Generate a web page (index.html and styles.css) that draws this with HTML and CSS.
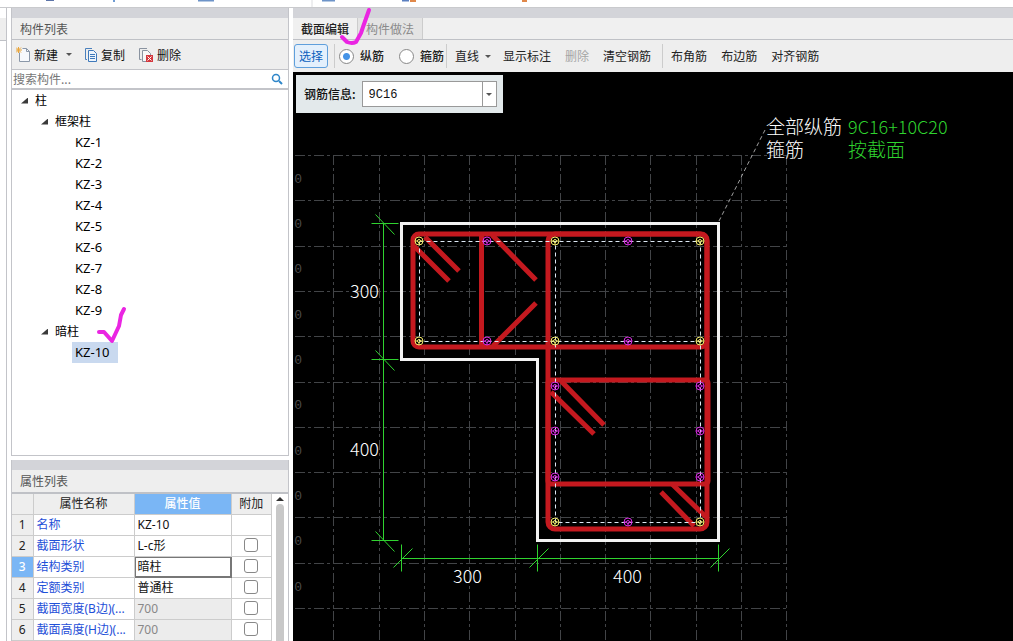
FILE: index.html
```html
<!DOCTYPE html>
<html lang="zh-CN">
<head>
<meta charset="utf-8">
<title>截面编辑</title>
<link rel="stylesheet" href="styles.css">
</head>
<body>
<div class="app">
  <div class="ribbon-edge" aria-hidden="true">
    <svg width="560" height="7">
      <path d="M46 0h8" stroke="#5c74a8" stroke-width="2"/>
      <path d="M114 0v2" stroke="#6f9bd2" stroke-width="2"/>
      <path d="M198 0h16M322 0h13" stroke="#6d93c8" stroke-width="3"/>
      <path d="M312 0v7" stroke="#dcdde0"/>
      <path d="M402 0h7" stroke="#5a7fc0" stroke-width="3"/>
      <path d="M410 0h6M522 0h5" stroke="#e0884a" stroke-width="4"/>
    </svg>
  </div>
  <div class="workspace">
    <div class="nav-edge"><div class="nav-cap"></div></div>

    <aside class="side">
      <section class="panel panel-tree">
        <div class="grip"></div>
        <h2 class="panel-title">构件列表</h2>
        <div class="list-tools">
          <button class="tool tool-new" type="button">
            <svg width="15" height="16"><path d="M3.500 5.500V14.500H13.500V4.500L10.500 1.500H6.500" fill="#f7f9fc" stroke="#8a97a8"/><path d="M10.500 1.500V4.500h3" fill="none" stroke="#8a97a8"/><path d="M2.500 0v6M0 3h6M0 .5l5 5M5 .5l-5 5" stroke="#e9a53a"/></svg>
            新建<span class="caret"></span>
          </button>
          <button class="tool tool-copy" type="button">
            <svg width="14" height="14"><path d="M3 11.500H1.500V.5H8" fill="none" stroke="#4a80bd"/><path d="M4.500 2.500H9.500L12.500 5.500V13.500H4.500Z" fill="#eef5fc" stroke="#3f79ba"/><path d="M6 6.500h5M6 8.500h5M6 10.500h5" stroke="#3f79ba"/></svg>
            复制
          </button>
          <button class="tool" type="button">
            <svg width="15" height="14"><path d="M2.500 11.500H.5V.5H8" fill="none" stroke="#8a93a0"/><path d="M7 13.500H3.500V2.500H8.500L11.500 5.500V7" fill="#f7f7f7" stroke="#8a93a0"/><rect x="7" y="7" width="7" height="7" fill="#d5383e"/><path d="M8.500 8.500l4 4M12.500 8.500l-4 4" stroke="#fff"/></svg>
            删除
          </button>
        </div>
        <div class="search">
          <input class="search-input" type="text" placeholder="搜索构件..." aria-label="搜索构件">
          <button class="search-btn" type="button" aria-label="搜索"><svg width="12" height="12"><circle cx="5" cy="5" r="3.500" fill="none" stroke="#2e86c9" stroke-width="1.500"/><path d="M8 8l3 3" stroke="#2e86c9" stroke-width="2"/></svg></button>
        </div>
        <ul class="tree">
          <li><span class="node"><i class="twist"></i>柱</span>
            <ul class="level-2">
              <li><span class="node"><i class="twist"></i>框架柱</span>
                <ul class="leaves">
                  <li><span class="leaf">KZ-1</span></li>
                  <li><span class="leaf">KZ-2</span></li>
                  <li><span class="leaf">KZ-3</span></li>
                  <li><span class="leaf">KZ-4</span></li>
                  <li><span class="leaf">KZ-5</span></li>
                  <li><span class="leaf">KZ-6</span></li>
                  <li><span class="leaf">KZ-7</span></li>
                  <li><span class="leaf">KZ-8</span></li>
                  <li><span class="leaf">KZ-9</span></li>
                </ul>
              </li>
              <li><span class="node"><i class="twist"></i>暗柱</span>
                <ul class="leaves"><li><span class="leaf leaf-active">KZ-10</span></li></ul>
              </li>
            </ul>
          </li>
        </ul>
      </section>

      <section class="panel panel-props">
        <div class="grip"></div>
        <h2 class="panel-title">属性列表</h2>
        <div class="props-body">
          <table class="props">
            <thead><tr><th class="c-num"></th><th class="c-name">属性名称</th><th class="c-value is-current">属性值</th><th class="c-extra">附加</th></tr></thead>
            <tbody>
              <tr><th>1</th><td class="name">名称</td><td>KZ-10</td><td></td></tr>
              <tr><th>2</th><td class="name">截面形状</td><td>L-c形</td><td class="check"><input type="checkbox" aria-label="截面形状 附加"></td></tr>
              <tr><th class="is-current">3</th><td class="name">结构类别</td><td class="is-editing">暗柱</td><td class="check"><input type="checkbox" aria-label="结构类别 附加"></td></tr>
              <tr><th>4</th><td class="name">定额类别</td><td>普通柱</td><td class="check"><input type="checkbox" aria-label="定额类别 附加"></td></tr>
              <tr><th>5</th><td class="name">截面宽度(B边)(...</td><td class="locked">700</td><td class="check"><input type="checkbox" aria-label="截面宽度 附加"></td></tr>
              <tr><th>6</th><td class="name">截面高度(H边)(...</td><td class="locked">700</td><td class="check"><input type="checkbox" aria-label="截面高度 附加"></td></tr>
            </tbody>
          </table>
          <div class="scroll"><i class="scroll-up"></i><i class="scroll-thumb"></i></div>
        </div>
      </section>
    </aside>

    <main class="editor">
      <div class="grip"></div>
      <div class="tabs" role="tablist">
        <button class="tab tab-active" type="button" role="tab" aria-selected="true">截面编辑</button>
        <button class="tab" type="button" role="tab" aria-selected="false">构件做法</button>
      </div>
      <div class="bar">
        <button class="pick" type="button">选择</button>
        <i class="rule"></i>
        <label class="mode"><input type="radio" name="mode" checked>纵筋</label>
        <label class="mode"><input type="radio" name="mode">箍筋</label>
        <i class="rule rule-tight"></i>
        <button class="cmd cmd-line" type="button">直线<span class="caret"></span></button>
        <button class="cmd" type="button">显示标注</button>
        <button class="cmd" type="button" disabled>删除</button>
        <button class="cmd" type="button">清空钢筋</button>
        <i class="rule rule-tight"></i>
        <button class="cmd" type="button">布角筋</button>
        <button class="cmd" type="button">布边筋</button>
        <button class="cmd" type="button">对齐钢筋</button>
      </div>
      <div class="canvas">
        <svg class="drawing" role="img" aria-label="KZ-10 截面">
          <defs>
            <g id="rebar" fill="none"><circle r="4"/><circle r="1.500"/><path d="M-4 0h3M1 0h3M0 4v-3"/></g>
            <path id="tick-v" d="M-12 0H15M-8 -9L11 11"/>
            <path id="tick-h" d="M0 -14V13M-8 9L11 -10"/>
          </defs>
          <g transform="translate(-293 -72)">
            <path class="grid" d="M295 155.500H787M295 200.500H787M295 246.500H787M295 291.500H787M295 336.500H787M295 382.500H787M295 427.500H787M295 472.500H787M295 517.500H787M295 563.500H787M295 608.500H787"/>
            <path class="grid" d="M333.500 155V641M379.500 155V641M424.500 155V641M469.500 155V641M515.500 155V641M560.500 155V641M605.500 155V641M650.500 155V641M696.500 155V641M741.500 155V641M786.500 155V641"/>
            <g class="scale">
              <text x="302" y="183">0</text><text x="302" y="228">0</text><text x="302" y="273">0</text><text x="302" y="319">0</text><text x="302" y="364">0</text><text x="302" y="409">0</text><text x="302" y="455">0</text><text x="302" y="500">0</text><text x="302" y="545">0</text><text x="302" y="591">0</text>
            </g>
            <path class="leader" d="M719 221L765 130"/>
            <path class="outline" d="M401.500 223.500H718.500V540.500H537.500V359.500H401.500Z"/>
            <g class="stirrup">
              <rect x="413" y="234" width="294" height="113" rx="6"/>
              <rect x="548" y="234" width="159" height="295" rx="7"/>
              <rect x="548" y="380" width="160" height="104" rx="3"/>
              <path d="M481.500 234V347"/>
              <path class="hook" d="M414 246L449 281M425 237L459 271M492 235L536 280M493 346L536 303M551 392L594 434M561 381L604 425M661 492L694 526M672 484L706 517"/>
            </g>
            <path class="core" d="M419.500 241.500H700.500V522.500H555.500V241.500M419.500 241.500V341.500H700.500"/>
            <g stroke="#f2ea6a">
              <use href="#rebar" x="419" y="241"/><use href="#rebar" x="555" y="241"/><use href="#rebar" x="700" y="241"/><use href="#rebar" x="419" y="341"/><use href="#rebar" x="555" y="341"/><use href="#rebar" x="700" y="341"/><use href="#rebar" x="555" y="522"/><use href="#rebar" x="700" y="522"/>
            </g>
            <g stroke="#d62be0">
              <use href="#rebar" x="487" y="241"/><use href="#rebar" x="628" y="241"/><use href="#rebar" x="487" y="341"/><use href="#rebar" x="628" y="341"/><use href="#rebar" x="555" y="386"/><use href="#rebar" x="700" y="386"/><use href="#rebar" x="555" y="431"/><use href="#rebar" x="700" y="431"/><use href="#rebar" x="555" y="477"/><use href="#rebar" x="700" y="477"/><use href="#rebar" x="628" y="522"/>
            </g>
            <g class="dims">
              <path d="M383.500 223V541M401 558.500H719"/>
              <use href="#tick-v" x="383.500" y="223.500"/><use href="#tick-v" x="383.500" y="359.500"/><use href="#tick-v" x="383.500" y="540.500"/>
              <use href="#tick-h" x="401.500" y="558.500"/><use href="#tick-h" x="537.500" y="558.500"/><use href="#tick-h" x="718.500" y="558.500"/>
            </g>
            <g class="note">
              <text x="350" y="298">300</text><text x="350" y="456">400</text><text x="453" y="583">300</text><text x="613" y="583">400</text>
              <text class="note-cjk" x="766" y="134">全部纵筋</text><text class="note-cjk" x="766" y="157">箍筋</text>
              <text class="note-green" x="848" y="134">9C16+10C20</text><text class="note-cjk note-green" x="848" y="157">按截面</text>
            </g>
          </g>
        </svg>
        <div class="info">
          <label for="rebar-info">钢筋信息:</label>
          <div class="combo"><input id="rebar-info" type="text" value="9C16"><button type="button" aria-label="展开"><span class="caret"></span></button></div>
        </div>
      </div>
    </main>
  </div>
  <svg class="marks" aria-hidden="true"><path d="M342 37L347 42Q352 44 356 42L361 33L363 27L369 10"/><path d="M99 332L104 332L112 341L119 326L121 315L124 309"/></svg>
</div>
</body>
</html>
```
FILE: styles.css
```css
* { box-sizing: border-box; }
body {
  margin: 0;
  background: #fff;
  color: #111;
  font: 12px/20px "Noto Sans CJK SC", sans-serif;
}
button, input { font: inherit; color: inherit; margin: 0; }
button { padding: 0; border: 0; background: none; white-space: nowrap; }
ul { list-style: none; margin: 0; padding: 0; }
svg { display: block; }

.app { position: relative; display: flex; flex-direction: column; height: 100vh; overflow: hidden; }
.ribbon-edge { height: 8px; flex: none; border-bottom: 1px solid #c9cacd; overflow: hidden; }
.workspace { flex: 1; min-height: 0; display: grid; grid-template-columns: 7px 278px minmax(0, 1fr); column-gap: 4px; }
.nav-edge { border-right: 1px solid #c3c4c9; padding-top: 10px; }
.nav-cap { height: 23px; background: #eee; border-bottom: 1px solid #bfc1c6; }

.side { display: flex; flex-direction: column; gap: 4px; min-height: 0; }
.panel { display: flex; flex-direction: column; border: 1px solid #c3c4c9; border-top: 0; min-height: 0; }
.panel-tree { flex: 1; }
.panel-props { flex: none; border-bottom: 0; }
.grip { height: 10px; flex: none; background: #d3d4d9; }
.panel-title {
  margin: 0; padding: 0 8px; height: 22px; flex: none;
  background: #eee; border-bottom: 1px solid #bfc1c6;
  color: #555; font-size: 12px; font-weight: 400; line-height: 21px;
}
.panel-props .panel-title { height: 24px; border-bottom-width: 2px; }
.list-tools { display: flex; align-items: center; height: 30px; flex: none; padding-left: 4px; background: #eee; border-bottom: 1px solid #c3c4c9; }
.tool { display: flex; align-items: center; gap: 3px; margin-right: 14px; }
.tool-new { margin-right: 12px; }
.caret { display: inline-block; border: 3px solid transparent; border-top-color: #555; border-bottom: 0; }
.tool .caret { margin-left: 5px; }
.search { display: flex; align-items: center; height: 20px; flex: none; border-bottom: 2px solid #c3c4c9; }
.search-input { flex: 1; min-width: 0; height: 18px; padding: 0 1px; border: 0; outline: 0; background: none; }
.search-input::placeholder { color: #777; }
.search-btn { padding: 0 5px; }

.tree { line-height: 21px; padding-left: 9px; color: #000; font-family: "Noto Sans", "Noto Sans CJK SC", sans-serif; }
.node { display: flex; align-items: center; gap: 7px; height: 21px; }
.twist { width: 7px; height: 6px; background: #3a3a3a; clip-path: polygon(100% 0, 100% 100%, 0 100%); }
.level-2 { padding-left: 20px; }
.leaves { padding-left: 31px; font-size: 13px; }
.leaf { display: inline-block; height: 21px; padding: 0 8px 0 3px; vertical-align: top; }
.leaf-active { background: #c9d9ef; }

.props-body { display: flex; }
.props { flex: 1; min-width: 0; table-layout: fixed; border-collapse: collapse; font-family: "Noto Sans", "Noto Sans CJK SC", sans-serif; }
.props th, .props td { height: 21px; padding: 0 3px; border: 1px solid #ccc; border-width: 0 1px 1px 0; line-height: 20px; white-space: nowrap; overflow: hidden; }
.props th { background: #eee; font-weight: 400; text-align: center; color: #222; }
.props .c-num { width: 21px; }
.props .c-name { width: 101px; }
.props .c-value { width: 97px; }
.props .is-current { background: #7ab6f5; color: #fff; font-weight: 500; }
.props .name { color: #1f50d8; }
.props .locked { background: #ececec; color: #888; }
.props .is-editing { box-shadow: inset 0 0 0 1px #777; border-color: #777; }
.props .check { padding: 0; text-align: center; }
.check input { appearance: none; display: block; width: 14px; height: 14px; margin: 0 auto 2px; border: 1px solid #888; border-radius: 3px; background: #fff; }
.scroll { flex: none; width: 16px; display: flex; flex-direction: column; align-items: center; gap: 3px; padding-top: 3px; }
.scroll-up { border: 4px solid transparent; border-bottom-color: #333; border-top: 0; }
.scroll-thumb { flex: 1; width: 8px; background: #c8c8c8; border-radius: 4px 4px 0 0; }

.editor { display: flex; flex-direction: column; min-width: 0; min-height: 0; }
.tabs { display: flex; height: 22px; flex: none; background: #f0f0f0; border-bottom: 1px solid #bfc1c6; }
.tab { padding: 0 8px; border-right: 1px solid #ccc; background: #e4e4e4; color: #8a8a8a; line-height: 20px; }
.tab-active { background: #f0f0f0; color: #222; font-weight: 500; }
.bar { display: flex; align-items: center; height: 32px; flex: none; background: #eee; color: #222; overflow: hidden; }
.pick { height: 24px; margin-left: 1px; padding: 0 4px; border: 1px solid #5f9fdc; border-radius: 3px; background: #e4f0fc; color: #0b60bd; }
.rule { width: 1px; height: 24px; margin: 0 4px 0 6px; flex: none; background: #ccc; }
.rule-tight { margin: 0 8px 0 2px; }
.mode { display: flex; align-items: center; gap: 6px; margin-right: 15px; font-weight: 500; white-space: nowrap; }
.mode + .mode { margin-right: 0; }
.mode input { appearance: none; width: 15px; height: 15px; border: 1px solid #888; border-radius: 50%; background: #fff; }
.mode input:checked { background: radial-gradient(circle, #4593e6 0 3px, #fff 4px); }
.cmd { margin-right: 14px; }
.cmd-line { display: flex; align-items: center; gap: 6px; margin-right: 12px; }
.cmd:has(+ .rule) { margin-right: 9px; }
.cmd:disabled { color: #a5a5a5; }

.canvas { position: relative; flex: 1; min-height: 0; background: #000; }
.drawing { width: 100%; height: 100%; }
.info { position: absolute; left: 3px; top: 3px; display: flex; align-items: center; gap: 6px; padding: 6px 6px 6px 8px; background: #e3e9eb; font-weight: 500; }
.combo { display: flex; width: 135px; height: 26px; border: 1px solid #999; background: #fff; }
.combo input { flex: 1; min-width: 0; padding: 2px 6px 0; border: 0; outline: 0; background: none; font: 12px "Liberation Mono", monospace; }
.combo button { display: flex; align-items: center; justify-content: center; width: 14px; border-left: 1px solid #999; }

.grid { fill: none; stroke: #424447; stroke-dasharray: 10 3 3 3; }
.scale { fill: #4a4a4a; font: 13px "Liberation Mono", monospace; text-anchor: end; }
.leader { stroke: #a0a0a0; stroke-dasharray: 4 3; }
.outline { fill: none; stroke: #f2f2f2; stroke-width: 3; }
.stirrup { fill: none; stroke: #c4191f; stroke-width: 5; }
.stirrup .hook { stroke-width: 5; }
.core { fill: none; stroke: #dde9f5; stroke-dasharray: 4 3; }
.dims { fill: none; stroke: #2fd32f; }
.note { fill: #fff; font: 300 18px "Noto Sans CJK SC", sans-serif; }
.note-cjk { font-size: 19px; }
.note-green { fill: #2fd32f; }

.marks { position: absolute; left: 0; top: 0; width: 100%; height: 100%; pointer-events: none; fill: none; stroke: #ea25e2; stroke-width: 4; stroke-linecap: round; stroke-linejoin: round; }
```
